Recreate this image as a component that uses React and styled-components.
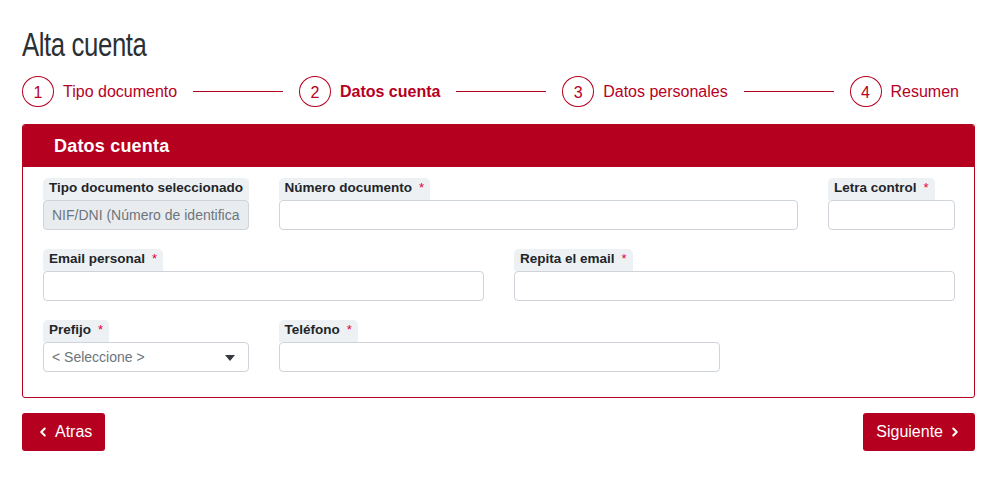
import { createGlobalStyle } from 'styled-components';
import styled from 'styled-components';
import { ChevronLeft, ChevronRight } from 'lucide-react';

const RED = '#b5001f';

const GlobalStyle = createGlobalStyle`
  body {
    margin: 0;
    background: #fff;
    font-family: "Liberation Sans", Arial, sans-serif;
    color: #212529;
  }
`;

const Page = styled.div`
  padding: 24px 10px 0 22px;
`;

const Title = styled.h1`
  margin: 0 0 10px;
  font-family: "Liberation Sans", Arial, sans-serif;
  font-weight: 400;
  font-size: 33px;
  line-height: 42px;
  letter-spacing: -0.5px;
  color: #2b3035;
  transform: scaleX(0.78);
  transform-origin: left center;
`;

const Stepper = styled.div`
  display: flex;
  align-items: center;
  padding-right: 16px;
  margin-bottom: 17px;
`;

const Step = styled.div`
  display: flex;
  align-items: center;
  gap: 9px;
  color: ${RED};
  font-size: 16px;
  font-weight: ${(p) => (p.active ? 700 : 400)};
  white-space: nowrap;
`;

const Circle = styled.span`
  width: 30px;
  height: 27px;
  padding-top: 2px;
  border: 1px solid ${RED};
  border-radius: 50%;
  display: flex;
  align-items: center;
  justify-content: center;
  font-weight: 400;
  font-size: 16px;
`;

const Line = styled.span`
  flex: 1;
  height: 1px;
  background: ${RED};
  margin: 0 16px;
`;

const Card = styled.section`
  border: 1px solid ${RED};
  border-radius: 3px;
  overflow: hidden;
`;

const CardHeader = styled.div`
  background: ${RED};
  color: #fff;
  height: 42px;
  display: flex;
  align-items: center;
  padding-left: 31px;
  font-size: 18px;
  font-weight: 700;
  letter-spacing: 0.2px;
`;

const CardBody = styled.div`
  display: grid;
  grid-template-columns: repeat(12, 1fr);
  column-gap: 30px;
  row-gap: 19px;
  padding: 11px 19px 25px 20px;
`;

const Field = styled.div`
  grid-column: span ${(p) => p.span};
  display: flex;
  flex-direction: column;
  align-items: flex-start;
`;

const Label = styled.label`
  background: #eef1f4;
  border-radius: 5px 5px 0 0;
  padding: 0 6px;
  height: 22px;
  line-height: 20px;
  font-size: 13.5px;
  font-weight: 700;
  color: #212529;
  white-space: nowrap;
`;

const Req = styled.span`
  color: #e4003b;
  font-weight: 400;
  font-size: 13px;
  margin-left: 7px;
`;

const Input = styled.input`
  box-sizing: border-box;
  width: 100%;
  height: 30px;
  border: 1px solid #ced4da;
  border-radius: 4px;
  padding: 0 8px;
  font-family: "Liberation Sans", Arial, sans-serif;
  font-size: 14px;
  color: #6c757d;
  background: ${(p) => (p.disabled ? '#e9ecef' : '#fff')};
  outline: none;
`;

const SelectWrap = styled.div`
  position: relative;
  width: 100%;
`;

const Select = styled.select`
  box-sizing: border-box;
  width: 100%;
  height: 30px;
  border: 1px solid #ced4da;
  border-radius: 4px;
  padding: 0 8px;
  font-family: "Liberation Sans", Arial, sans-serif;
  font-size: 14px;
  color: #6c757d;
  background: #fff;
  appearance: none;
  outline: none;
`;

const Caret = styled.svg`
  position: absolute;
  right: 14px;
  top: 13px;
  pointer-events: none;
`;

const Actions = styled.div`
  display: flex;
  justify-content: space-between;
  margin-top: 15px;
`;

const Button = styled.button`
  display: flex;
  align-items: center;
  gap: 5px;
  height: 38px;
  padding: ${(p) => (p.next ? '0 13px 0 13px' : '0 13px 0 14px')};
  background: ${RED};
  color: #fff;
  border: none;
  border-radius: 3px;
  font-family: "Liberation Sans", Arial, sans-serif;
  font-size: 16px;
`;

const steps = [
  { n: 1, label: 'Tipo documento' },
  { n: 2, label: 'Datos cuenta', active: true },
  { n: 3, label: 'Datos personales' },
  { n: 4, label: 'Resumen' },
];

const FieldLabel = ({ children, required }) => (
  <Label>
    {children}
    {required && <Req>*</Req>}
  </Label>
);

export default function App() {
  return (
    <Page>
      <GlobalStyle />
      <Title>Alta cuenta</Title>
      <Stepper>
        {steps.map((s, i) => [
          i > 0 && <Line key={'l' + s.n} />,
          <Step key={s.n} active={s.active}>
            <Circle>{s.n}</Circle>
            {s.label}
          </Step>,
        ])}
      </Stepper>
      <Card>
        <CardHeader>Datos cuenta</CardHeader>
        <CardBody>
          <Field span={3}>
            <FieldLabel>Tipo documento seleccionado</FieldLabel>
            <Input disabled defaultValue='NIF/DNI (Número de identificación fiscal)' />
          </Field>
          <Field span={7}>
            <FieldLabel required>Número documento</FieldLabel>
            <Input />
          </Field>
          <Field span={2}>
            <FieldLabel required>Letra control</FieldLabel>
            <Input />
          </Field>
          <Field span={6}>
            <FieldLabel required>Email personal</FieldLabel>
            <Input />
          </Field>
          <Field span={6}>
            <FieldLabel required>Repita el email</FieldLabel>
            <Input />
          </Field>
          <Field span={3}>
            <FieldLabel required>Prefijo</FieldLabel>
            <SelectWrap>
              <Select defaultValue=''>
                <option value=''>&lt; Seleccione &gt;</option>
              </Select>
              <Caret width='10' height='6' viewBox='0 0 10 6'>
                <path d='M0 0h10L5 6z' fill='#343a40' />
              </Caret>
            </SelectWrap>
          </Field>
          <Field span={6}>
            <FieldLabel required>Teléfono</FieldLabel>
            <Input />
          </Field>
        </CardBody>
      </Card>
      <Actions>
        <Button>
          <ChevronLeft size={14} strokeWidth={3.5} />
          Atras
        </Button>
        <Button next>
          Siguiente
          <ChevronRight size={14} strokeWidth={3.5} />
        </Button>
      </Actions>
    </Page>
  );
}
